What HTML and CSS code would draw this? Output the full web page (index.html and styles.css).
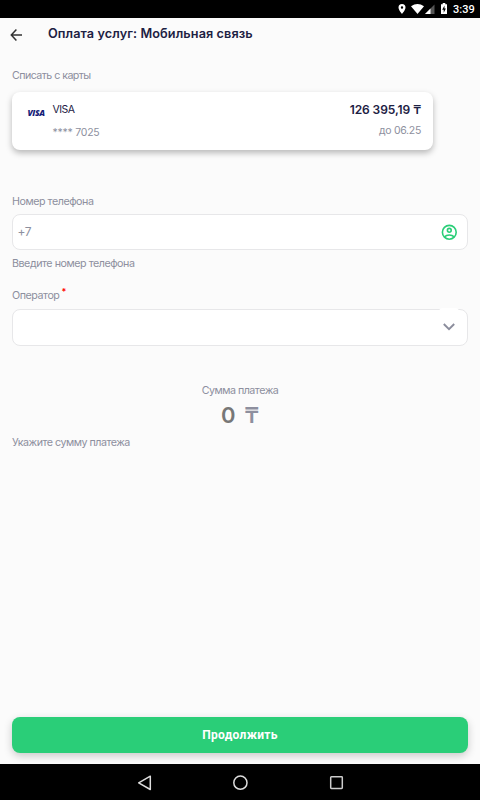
FILE: index.html
```
<!DOCTYPE html>
<html lang="ru">
<head>
<meta charset="utf-8">
<title>Оплата услуг</title>
<link rel="stylesheet" href="styles.css">
</head>
<body>
<div class="screen">
  <div class="status">
    <svg class="status-icons" width="52" height="18" viewBox="0 0 52 18">
      <path fill="#fff" fill-rule="evenodd" d="M6 4a3.500 3.500 0 0 0-3.500 3.500C2.500 10 6 14 6 14s3.500-4 3.500-6.500A3.500 3.500 0 0 0 6 4zm0 2.300a1.200 1.200 0 1 1 0 2.400 1.200 1.200 0 0 1 0-2.400z"/>
      <path fill="#fff" d="M15 6.200Q21.500 1.800 28 6.200L21.500 14z"/>
      <path fill="#555" d="M38.500 4.500V14H29z"/>
      <path fill="#fff" d="M34.500 8.500V14H29z"/>
      <path fill="#fff" fill-rule="evenodd" d="M45 4.300h1.700V3h2.600v1.300H51V14h-6zM48.500 5.500 46.200 9.700h1.500v3l2.200-4.200h-1.400z"/>
    </svg>
    <span class="clock">3:39</span>
  </div>
  <header class="header">
    <svg class="back" width="12" height="12" viewBox="0 0 12 12" fill="none" stroke="#333" stroke-width="1.500"><path d="M6.400.6 1.300 6l5.100 5.400M1.400 6H12"/></svg>
    <h1 class="title">Оплата услуг: Мобильная связь</h1>
  </header>
  <main class="main">
    <div class="label from">Списать с карты</div>
    <section class="card">
      <span class="logo">VISA</span>
      <div class="card-info"><div class="card-name">VISA</div><div class="muted number">**** 7025</div></div>
      <div class="card-sum"><div class="balance">126 395,19 ₸</div><div class="muted expiry">до 06.25</div></div>
    </section>
    <div class="label phone">Номер телефона</div>
    <div class="field">
      <span class="prefix">+7</span>
      <svg class="person" width="16" height="16" viewBox="0 0 16 16" fill="none" stroke="#2ace78" stroke-width="1.600"><circle cx="8.300" cy="8.300" r="6.900"/><circle cx="8.300" cy="6.300" r="1.900"/><path d="M3.500 12.900Q5.300 11 8.300 11t4.800 1.900"/></svg>
    </div>
    <div class="label phone-hint">Введите номер телефона</div>
    <div class="label operator">Оператор<span class="star">*</span></div>
    <div class="field select">
      <span class="drop"><svg width="12" height="8" viewBox="0 0 12 8" fill="none" stroke="#8b8d9c" stroke-width="1.900"><path d="M.8 1 6 6.200 11.200 1"/></svg></span>
    </div>
    <div class="label sum-label">Сумма платежа</div>
    <div class="amount"><span class="zero">0</span><span class="tenge">₸</span></div>
    <div class="label sum-hint">Укажите сумму платежа</div>
    <button class="submit">Продолжить</button>
  </main>
  <nav class="nav">
    <svg width="16" height="16" viewBox="0 0 16 16" fill="none" stroke="#ddd" stroke-width="1.500"><path stroke-linejoin="round" d="M14.300 1.200v13.300L2.700 7.800z"/></svg>
    <svg width="16" height="16" viewBox="0 0 16 16" fill="none" stroke="#ddd" stroke-width="1.500"><circle cx="8.400" cy="7.700" r="6.600"/></svg>
    <svg width="16" height="16" viewBox="0 0 16 16" fill="none" stroke="#ccc" stroke-width="1.500"><rect x="2.700" y="1.800" width="11.600" height="11.600" rx=".7"/></svg>
  </nav>
</div>
</body>
</html>
```
FILE: styles.css
```
* { box-sizing: border-box; }
body { margin: 0; font-family: Inter, Roboto, sans-serif; }
svg { display: block; flex: none; }
.screen { width: 480px; height: 800px; display: flex; flex-direction: column; background: #fbfbfb; overflow: hidden; }
.status { height: 18px; flex: none; background: #000; display: flex; justify-content: flex-end; align-items: center; padding-right: 6px; gap: 5px; }
.clock { font: 500 11px/18px Roboto, sans-serif; color: #fff; width: 21px; white-space: nowrap; padding-top: 1px; }
.header { height: 32px; flex: none; display: flex; align-items: center; padding: 1px 10px 0; gap: 26px; }
.title { margin: -1px 0 0; font-size: 12.700px; line-height: 18px; font-weight: 600; letter-spacing: .09px; color: #1d2143; white-space: nowrap; }
.main { flex: 1; display: flex; flex-direction: column; padding: 0 12px 11px; }
.label, .muted { font-size: 10.700px; line-height: 14px; font-weight: 400; color: #8d8f9e; letter-spacing: -.46px; white-space: nowrap; }
.from { margin-top: 19px; letter-spacing: -.57px; }
.card { width: 421px; height: 58px; margin-top: 9px; padding: 10px 12px 0 15px; display: flex; background: #fff; border-radius: 8px; box-shadow: 0 3px 6px rgba(0,0,0,.27); }
.logo { width: 25.500px; padding: 3px 0 0 .5px; font: italic 800 8.500px/15px "Open Sans", sans-serif; letter-spacing: -.4px; color: #171c78; }
.card-info { flex: 1; }
.card-name { font-size: 10.500px; line-height: 15px; color: #1d2143; letter-spacing: -.5px; }
.number { margin-top: 9px; font-size: 10.500px; letter-spacing: -.25px; }
.card-sum { text-align: right; }
.balance { font-size: 12px; line-height: 16px; font-weight: 600; letter-spacing: -.08px; color: #1d2143; white-space: nowrap; }
.expiry { margin-top: 6px; font-size: 10.500px; letter-spacing: -.3px; }
.phone { margin-top: 45px; }
.field { height: 36px; margin-top: 5px; padding: 0 10px 0 5px; display: flex; align-items: center; justify-content: space-between; background: #fff; border: 1px solid #e7e7e9; border-radius: 8px; }
.prefix { font-size: 12px; color: #8d8f9e; margin: -2px 0 0 -.5px; letter-spacing: -.3px; }
.phone-hint { margin-top: 7px; }
.operator { margin-top: 18px; display: flex; }
.star { margin: -4px 0 0 2px; color: #f00; font-size: 9px; font-weight: 600; }
.select { height: 37px; margin-top: 6px; padding: 0 8px; justify-content: flex-end; }
.drop { width: 20px; height: 37px; margin-top: -2px; display: flex; align-items: center; justify-content: center; background: #fff; border-radius: 4px; }
.sum-label { margin-top: 38px; text-align: center; letter-spacing: -.5px; }
.amount { height: 28px; margin-top: 3px; display: flex; justify-content: center; gap: 9px; font-size: 22px; line-height: 28px; font-weight: 600; }
.zero { color: #777; }
.tenge { color: #8d8f9e; }
.sum-hint { margin-top: 7px; letter-spacing: -.5px; }
.submit { height: 36px; margin-top: auto; flex: none; border: 0; border-radius: 8px; background: #2ace78; color: #fff; font: 700 12px/36px Roboto, sans-serif; letter-spacing: .3px; padding: 0; box-shadow: 0 3px 8px rgba(0,0,0,.2); }
.nav { height: 36px; flex: none; background: #000; display: flex; align-items: center; justify-content: center; gap: 80px; padding-top: 1px; }
```
